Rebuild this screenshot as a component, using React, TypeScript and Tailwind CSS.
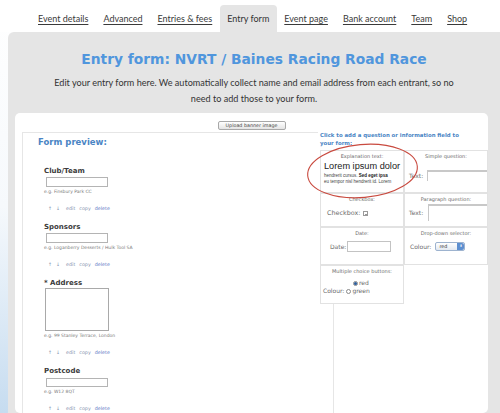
import type React from 'react';

const tabs = [
  { text: 'Event details', active: false },
  { text: 'Advanced', active: false },
  { text: 'Entries & fees', active: false },
  { text: 'Entry form', active: true },
  { text: 'Event page', active: false },
  { text: 'Bank account', active: false },
  { text: 'Team', active: false },
  { text: 'Shop', active: false },
];

const FieldLinks = () => (
  <div className="mt-[11px] flex gap-[4px] pl-[4px] text-[4.8px] leading-[6px] text-[#8391ad]">
    <span>↑</span>
    <span>↓</span>
    <span className="ml-[2px]">edit</span>
    <span>copy</span>
    <span className="text-[#5b78c4]">delete</span>
  </div>
);

const PreviewField = ({
  label,
  hint,
  area,
}: { label: string; hint: string; area?: boolean }) => (
  <div className="mb-[11px]">
    <div className="text-[7px] font-bold leading-[9px] text-[#3b3b3b]">{label}</div>
    {area ? (
      <div className="mt-[0.5px] ml-[1px] h-[43px] w-[64px] border border-[#a9a9a9] bg-white" />
    ) : (
      <div className="mt-[1.5px] ml-[2px] h-[9.5px] w-[62px] border border-[#b4b4b4] bg-white" />
    )}
    <div className="mt-[2px] text-[4.5px] leading-[6px] text-[#7a7a7a]">{hint}</div>
    <FieldLinks />
  </div>
);

const BoxTitle = ({ children }: { children: React.ReactNode }) => (
  <div className="pt-[2px] text-center text-[5px] leading-[7px] text-[#6b6b6b]">
    {children}
  </div>
);

const Radio = ({ checked }: { checked?: boolean }) => (
  <span className="mr-[1px] inline-flex h-[5px] w-[5px] items-center justify-center rounded-full border border-[#8a8a8a] bg-white align-middle">
    {checked && <span className="h-[2.5px] w-[2.5px] rounded-full bg-[#2c5d9c]" />}
  </span>
);

const App: React.FC = () => {
  return (
    <div
      className="relative h-[413px] w-[500px] overflow-hidden bg-gradient-to-b from-white via-[#f6f9fc] to-[#c6dcf0]"
      style={{ fontFamily: 'Lato, "Open Sans", sans-serif' }}
    >
      {/* tab strip */}
      <div className="flex h-[32px] bg-white pl-[30.5px] pt-[5px]">
        {tabs.map((tab) => (
          <div
            key={tab.text}
            className={`flex items-center whitespace-nowrap rounded-t-[4px] px-[7.5px] text-[9px] ${
              tab.active ? 'bg-[#e5e5e5] text-[#333]' : 'text-[#3a3a3a] underline underline-offset-[1.5px]'
            }`}
          >
            {tab.text}
          </div>
        ))}
      </div>

      {/* grey page panel */}
      <div className="ml-[8px] h-[381px] rounded-tl-[6px] bg-[#e5e5e5]">
        <h1
          className="pt-[18px] text-center text-[13.8px] font-bold leading-[18px] text-[#5096dd]"
          style={{ fontFamily: '"DejaVu Sans", Verdana, sans-serif' }}
        >
          Entry form: NVRT / Baines Racing Road Race
        </h1>
        <p className="mt-[7px] text-center text-[9.1px] leading-[16px] text-[#333]">
          Edit your entry form here. We automatically collect name and email address from each entrant, so no
          <br />
          need to add those to your form.
        </p>

        {/* white card */}
        <div
          className="relative mt-[6px] ml-[7px] h-[300px] w-[473px] rounded-[5px] bg-white"
          style={{ fontFamily: '"DejaVu Sans", Verdana, sans-serif' }}
        >
          <div className="flex justify-center pt-[8px]">
            <button className="h-[9px] w-[68px] rounded-[2px] border border-[#a8a8a8] bg-gradient-to-b from-white to-[#e4e4e4] text-[4.8px] leading-[7px] text-[#444]">
              Upload banner image
            </button>
          </div>

          {/* form preview */}
          <div className="mt-[2px] ml-[7px] h-[300px] w-[312px] border-t border-r border-l border-[#e6e6e6] pl-[15px]">
            <div className="pt-[4px] text-[8.5px] font-bold leading-[10px] text-[#4a85c4]">
              Form preview:
            </div>
            <div className="mt-[19.5px] pl-[6px]">
              <PreviewField label="Club/Team" hint="e.g. Finsbury Park CC" />
              <PreviewField label="Sponsors" hint="e.g. Loganberry Desserts / Hulk Tool SA" />
              <PreviewField label="* Address" hint="e.g. 99 Stanley Terrace, London" area />
              <PreviewField label="Postcode" hint="e.g. W12 8QT" />
            </div>
          </div>

          {/* question palette */}
          <div className="absolute top-[18px] left-[303px] w-[170px] bg-white">
            <div className="pl-[2px] text-[5.4px] font-bold leading-[8px] text-[#4a85c4]">
              Click to add a question or information field to
              <br />
              your form:
            </div>
            <div className="mt-[3px] ml-[2px] grid w-[168px] grid-cols-[84px_84px] grid-rows-[43px_34px_38px_39px] text-[#6b6b6b]">
              <div className="overflow-hidden border border-[#e2e2e2]">
                <BoxTitle>Explanation text:</BoxTitle>
                <div className="pl-[3px] whitespace-nowrap" style={{ fontFamily: '"Liberation Sans", Arial, sans-serif' }}>
                  <div className="mt-[1px] text-[9.2px] leading-[11px] text-[#222]">Lorem ipsum dolor</div>
                  <div className="text-[4.5px] leading-[7px] text-[#444]">
                    hendrerit cursus. <b className="text-[#222]">Sed eget ipsa</b>
                  </div>
                  <div className="text-[4.5px] leading-[6px] text-[#444]">eu tempor nisl hendrerit id. Lorem</div>
                </div>
              </div>
              <div className="overflow-hidden border border-[#e2e2e2]">
                <BoxTitle>Simple question:</BoxTitle>
                <div className="mt-[10px] flex items-center pl-[4px] text-[6px]">
                  <span>Text:</span>
                  <span className="ml-[4px] h-[11px] flex-1 border-t-[2px] border-l border-[#c8c8c8] bg-white" />
                </div>
              </div>

              <div className="border border-[#e2e2e2]">
                <BoxTitle>Checkbox:</BoxTitle>
                <div className="mt-[6px] flex items-center pl-[6px] text-[6.4px]">
                  <span>Checkbox:</span>
                  <span className="ml-[3px] inline-flex h-[5px] w-[5px] items-center justify-center border border-[#9a9a9a] bg-white">
                    <span className="h-[0.5px] w-[2.5px] bg-[#999]" />
                  </span>
                </div>
              </div>
              <div className="overflow-hidden border border-[#e2e2e2]">
                <BoxTitle>Paragraph question:</BoxTitle>
                <div className="mt-[1px] flex items-center pl-[4px] text-[6px]">
                  <span>Text:</span>
                  <span className="ml-[5px] h-[17px] flex-1 border-t-[2px] border-l border-[#c8c8c8] bg-white" />
                </div>
              </div>

              <div className="border border-[#e2e2e2]">
                <BoxTitle>Date:</BoxTitle>
                <div className="mt-[4px] flex items-center pl-[9px] text-[6px]">
                  <span>Date:</span>
                  <span className="ml-[1px] h-[11px] w-[44px] border border-[#c3c3c3] bg-white" />
                </div>
              </div>
              <div className="border border-[#e2e2e2]">
                <BoxTitle>Drop-down selector:</BoxTitle>
                <div className="mt-[5px] flex items-center pl-[5px] text-[6px]">
                  <span>Colour:</span>
                  <span className="ml-[4px] flex h-[9px] w-[30px] items-center justify-between rounded-[2px] border border-[#9db3cf] bg-gradient-to-b from-white to-[#e3e9f1] pl-[3px] text-[4.8px] text-[#333]">
                    red
                    <span className="flex h-full w-[7px] items-center justify-center rounded-r-[2px] bg-[#5d8fd0] text-[3.5px] leading-[3px] text-white">
                      ⬍
                    </span>
                  </span>
                </div>
              </div>

              <div className="border border-[#e2e2e2]">
                <BoxTitle>Multiple choice buttons:</BoxTitle>
                <div className="mt-[4px] pl-[32px] text-[6px] leading-[8px]">
                  <Radio checked />
                  red
                </div>
                <div className="flex items-center pl-[2px] text-[6px] leading-[8px]">
                  <span className="mr-[2px]">Colour:</span>
                  <Radio />
                  green
                </div>
              </div>
              <div />
            </div>
          </div>
        </div>
      </div>

      {/* red annotation ring */}
      <svg className="absolute top-[138px] left-[300px]" width="130" height="66" viewBox="0 0 130 66">
        <ellipse
          cx="62.5"
          cy="33"
          rx="55"
          ry="26.5"
          transform="rotate(-5 62.5 33)"
          fill="none"
          stroke="#c94a3f"
          strokeWidth="1.1"
        />
      </svg>
    </div>
  );
};

export default App;
